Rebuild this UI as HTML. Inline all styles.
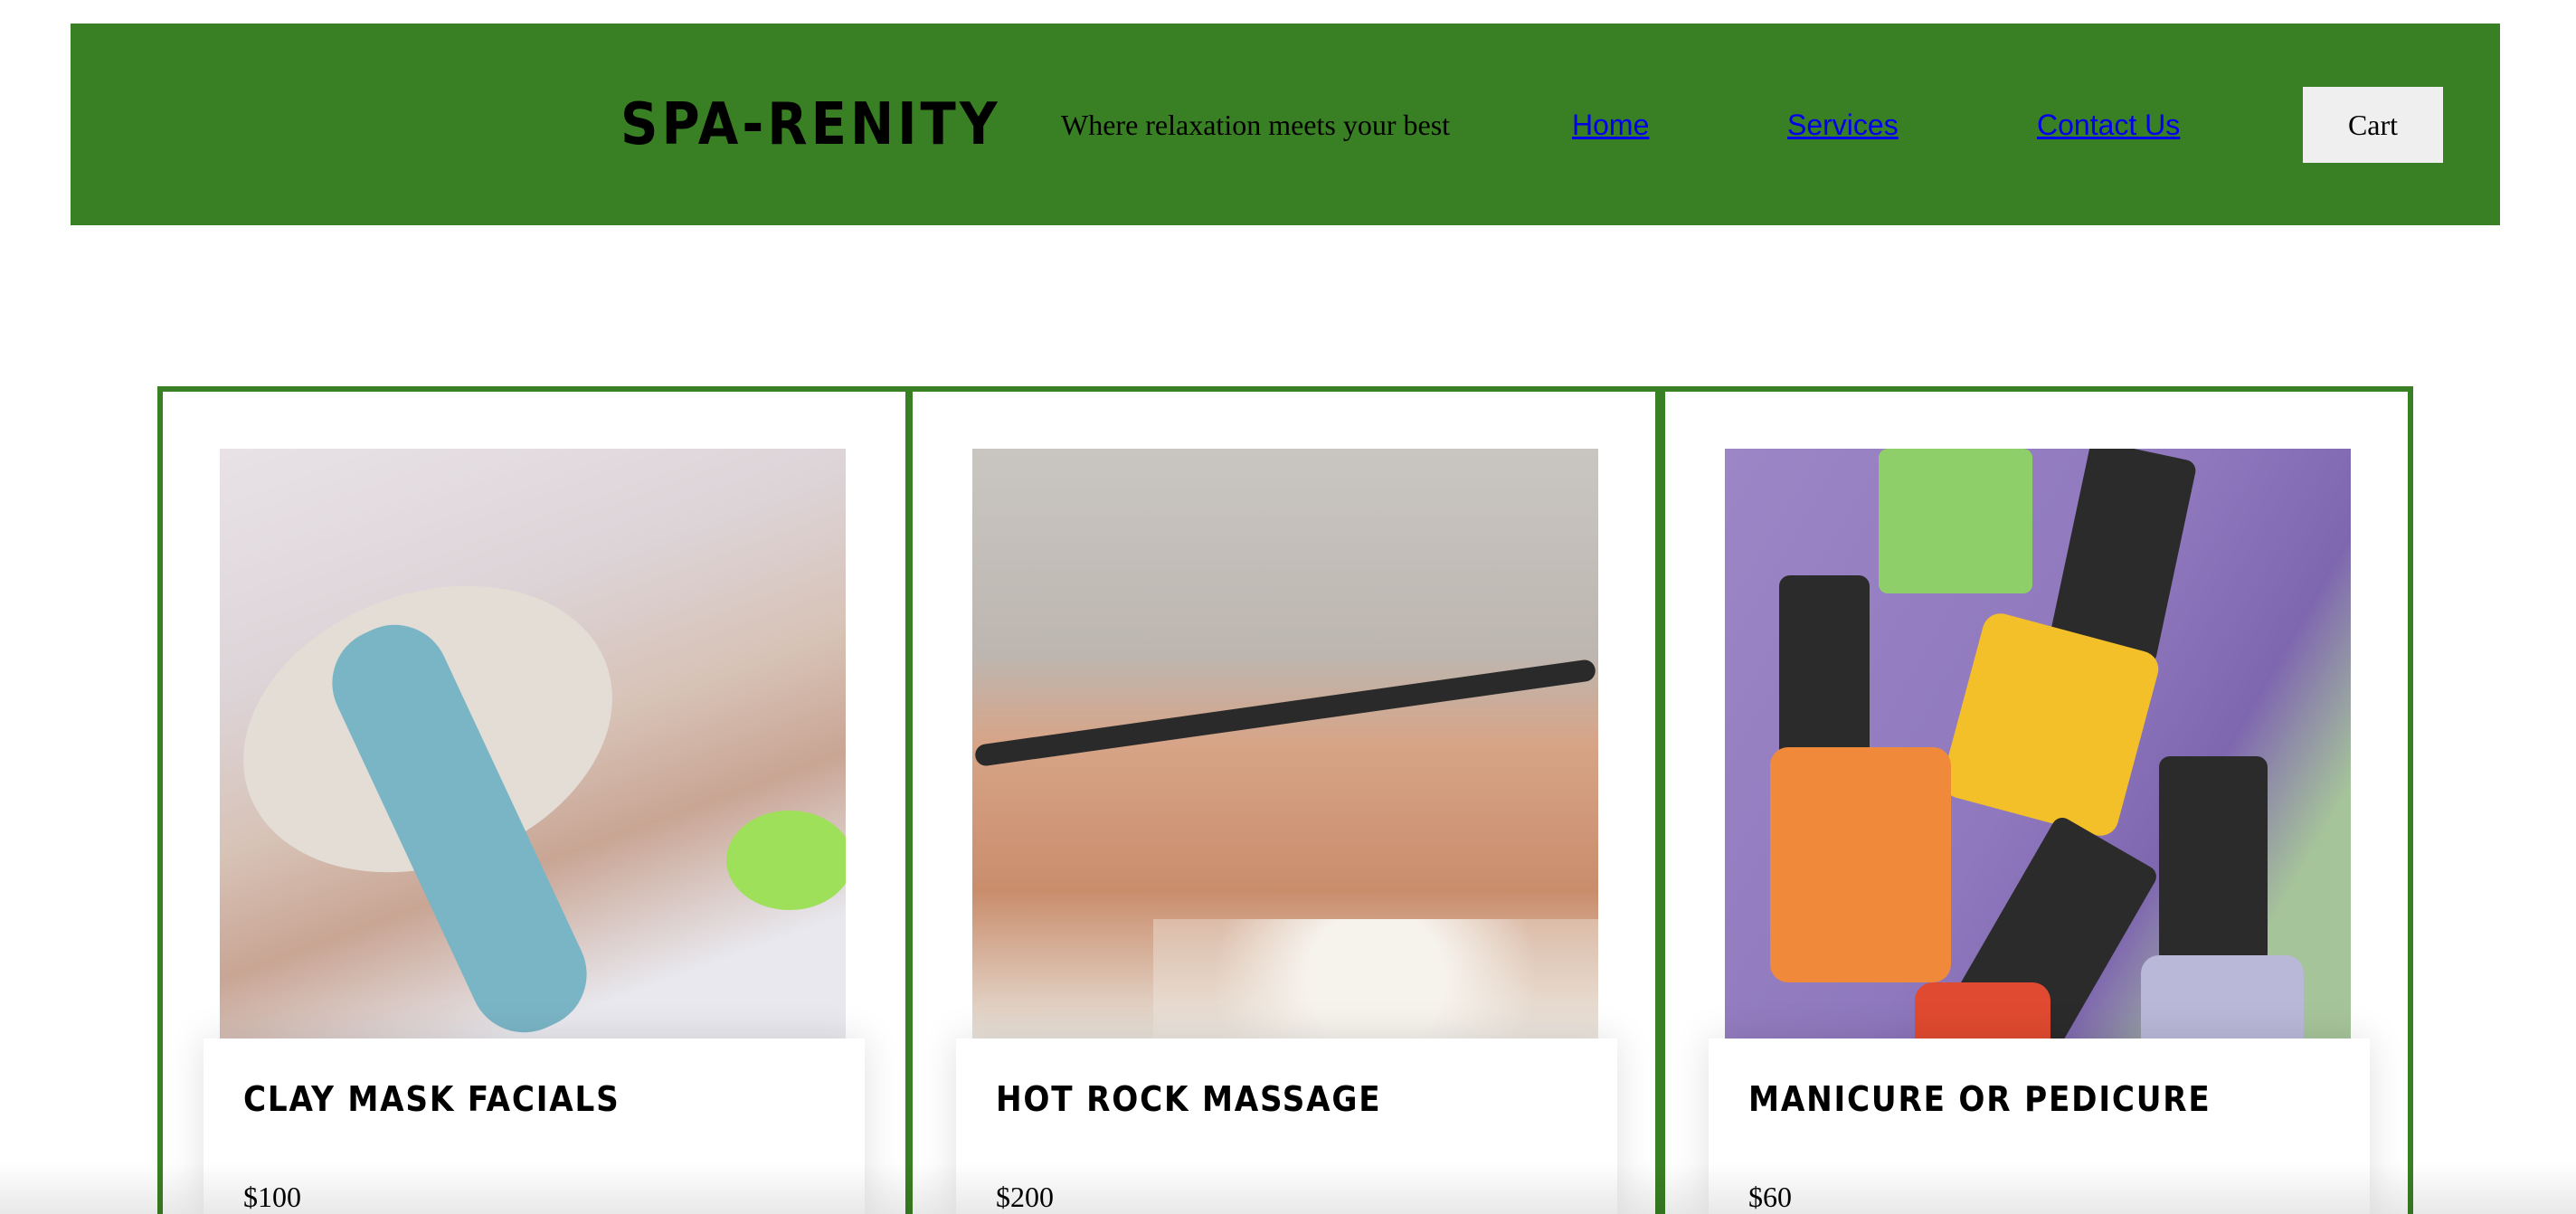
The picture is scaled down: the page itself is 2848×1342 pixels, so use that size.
<!DOCTYPE html>
<html><head><meta charset="utf-8"><style>
*{margin:0;padding:0;box-sizing:border-box}
html{width:2848px;height:1342px;overflow:hidden}
body{width:2848px;height:1342px;overflow:hidden;background:#fff;position:relative;font-family:"Liberation Serif",serif}
.hdr{position:absolute;left:78px;top:26px;width:2686px;height:223px;background:#397f23}
.logo{position:absolute;left:686px;top:98px;font-family:"DejaVu Sans Condensed","DejaVu Sans",sans-serif;font-weight:bold;font-size:64px;letter-spacing:4px;color:#000;line-height:80px}
.tag{position:absolute;left:1173px;top:118px;font-size:32px;line-height:40px;color:#000}
.nav{position:absolute;top:118px;font-family:"Liberation Sans",sans-serif;font-size:32px;line-height:40px;color:#00e;text-decoration:underline}
.cart{position:absolute;left:2546px;top:96px;width:155px;height:84px;background:#efefef;font-size:32px;line-height:84px;text-align:center}
.card{position:absolute;top:427px;width:833px;height:915px;border:6px solid #397f23;border-bottom:none}
.img{position:absolute;left:63px;top:63px;width:692px;height:652px;overflow:hidden}
.info{position:absolute;left:45px;top:715px;width:731px;height:194px;background:#fff;box-shadow:0 0 40px rgba(0,0,0,.12)}
.info h3{position:absolute;left:44px;top:45px;font-family:"DejaVu Sans Condensed","DejaVu Sans",sans-serif;font-weight:bold;font-size:38px;letter-spacing:1.8px}
.info p{position:absolute;left:44px;top:157px;font-size:32px}
.fade{position:absolute;left:0;top:1285px;width:2848px;height:57px;background:linear-gradient(rgba(0,0,0,0),rgba(0,0,0,.09))}
</style></head><body>
<div class="hdr"></div>
<div class="logo">SPA-RENITY</div>
<div class="tag">Where relaxation meets your best</div>
<a class="nav" style="left:1738px">Home</a>
<a class="nav" style="left:1976px">Services</a>
<a class="nav" style="left:2252px">Contact Us</a>
<div class="cart">Cart</div>

<div class="card" style="left:174px">
 <div class="img" style="background:linear-gradient(160deg,#e8e2e6 0%,#ddd4d8 30%,#d7c2b6 50%,#c9a594 65%,#e8e8ee 85%)">
  <div style="position:absolute;left:20px;top:160px;width:420px;height:300px;border-radius:50%;background:#e3ddd6;transform:rotate(-20deg)"></div>
  <div style="position:absolute;left:200px;top:180px;width:130px;height:480px;border-radius:60px;background:#7ab5c6;transform:rotate(-25deg)"></div>
  <div style="position:absolute;left:560px;top:400px;width:140px;height:110px;border-radius:50%;background:#9fe05a"></div>
 </div>
 <div class="info"><h3>CLAY MASK FACIALS</h3><p>$100</p></div>
</div>
<div class="card" style="left:1003px">
 <div class="img" style="left:66px;background:linear-gradient(180deg,#c9c6c2 0%,#bdb6b0 35%,#d7a487 50%,#c98d6c 75%,#e8e2da 100%)">
  <div style="position:absolute;left:0;top:280px;width:692px;height:24px;background:#2a2a2a;transform:rotate(-8deg);border-radius:12px"></div>
  <div style="position:absolute;left:200px;top:520px;width:492px;height:132px;background:radial-gradient(circle,#f6f2ec 30%,rgba(240,235,228,.4) 70%)"></div>
 </div>
 <div class="info" style="left:48px"><h3>HOT ROCK MASSAGE</h3><p>$200</p></div>
</div>
<div class="card" style="left:1835px">
 <div class="img" style="left:66px;background:linear-gradient(120deg,#9c86c6 0%,#8f78bd 50%,#7f67b0 70%,#a6c49a 85%)">
  <div style="position:absolute;left:170px;top:0;width:170px;height:160px;background:#8fcf6a;border-radius:10px"></div>
  <div style="position:absolute;left:380px;top:0;width:120px;height:230px;background:#2b2b2b;border-radius:12px;transform:rotate(12deg)"></div>
  <div style="position:absolute;left:260px;top:200px;width:200px;height:210px;background:#f3c02a;border-radius:20px;transform:rotate(15deg)"></div>
  <div style="position:absolute;left:60px;top:140px;width:100px;height:210px;background:#2b2b2b;border-radius:12px"></div>
  <div style="position:absolute;left:50px;top:330px;width:200px;height:260px;background:#f08a3a;border-radius:20px"></div>
  <div style="position:absolute;left:300px;top:420px;width:130px;height:240px;background:#2b2b2b;border-radius:12px;transform:rotate(30deg)"></div>
  <div style="position:absolute;left:480px;top:340px;width:120px;height:230px;background:#2b2b2b;border-radius:12px"></div>
  <div style="position:absolute;left:460px;top:560px;width:180px;height:120px;background:#b9b8d8;border-radius:20px"></div>
  <div style="position:absolute;left:210px;top:590px;width:150px;height:80px;background:#e04a30;border-radius:20px"></div>
 </div>
 <div class="info" style="left:48px"><h3>MANICURE OR PEDICURE</h3><p>$60</p></div>
</div>
<div class="fade"></div>
</body></html>
